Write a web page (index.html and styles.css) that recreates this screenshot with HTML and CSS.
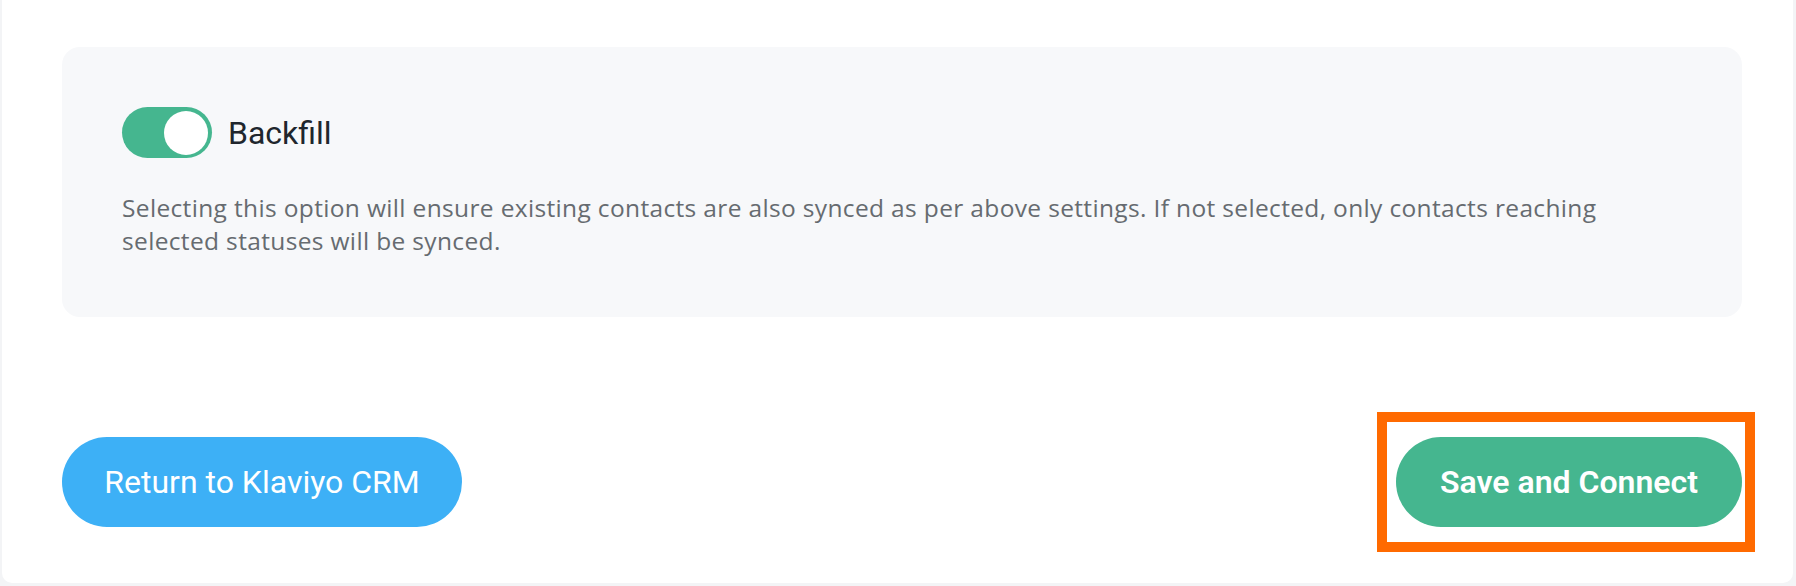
FILE: index.html
```html
<!DOCTYPE html>
<html lang="en">
<head>
    <meta charset="UTF-8">
    <meta name="viewport" content="width=device-width, initial-scale=1.0">
    <title>Klaviyo CRM settings</title>
    <link rel="stylesheet" href="styles.css">
</head>
<body>
    <div class="panel">
        <div class="option-card">
            <label class="switch-row">
                <span class="switch"><span class="knob"></span></span>
                <span class="switch-label">Backfill</span>
            </label>
            <p class="option-help">Selecting this option will ensure existing contacts are also synced as per above settings. If not selected, only contacts reaching selected statuses will be synced.</p>
        </div>

        <div class="actions">
            <button class="btn btn-return">Return to Klaviyo CRM</button>
            <span class="highlight">
                <button class="btn btn-save">Save and Connect</button>
            </span>
        </div>
    </div>
</body>
</html>
```

FILE: styles.css
```css
body {
    margin: 0;
    background: #f3f4f6;
    font-family: Roboto, "Noto Sans", Arial, sans-serif;
}
.panel {
    margin: 0 3px 2px 2px;
    padding: 47px 51px 56px 60px;
    background: white;
    border-radius: 0 0 10px 10px;
}
.option-card {
    padding: 60px 60px 60px 60px;
    background: #f7f8fa;
    border-radius: 18px;
}
.switch-row {
    display: flex;
    align-items: center;
    gap: 16px;
}
.switch {
    display: flex;
    align-items: center;
    justify-content: flex-end;
    width: 90px;
    height: 51px;
    padding: 0 4px;
    box-sizing: border-box;
    background: #45b68f;
    border-radius: 26px;
}
.knob {
    width: 44px;
    height: 44px;
    background: white;
    border-radius: 50%;
}
.switch-label {
    font-size: 32px;
    color: #20262d;
}
.option-help {
    margin: 33px 0 0 0;
    font-family: "Open Sans", Roboto, sans-serif;
    font-size: 24.5px;
    letter-spacing: 0.35px;
    line-height: 33px;
    color: #666b70;
}
.actions {
    display: flex;
    justify-content: space-between;
    align-items: center;
    margin-top: 120px;
}
.btn {
    height: 90px;
    padding: 0 40px;
    border: none;
    border-radius: 45px;
    color: white;
    font-family: inherit;
    font-size: 32px;
    cursor: pointer;
}
.btn-return {
    width: 400px;
    background: #3db0f6;
}
.btn-save {
    width: 346px;
    background: #45b68f;
    font-weight: 600;
}
.highlight {
    position: relative;
    display: flex;
}
.highlight::after {
    content: "";
    position: absolute;
    top: -25px;
    bottom: -25px;
    left: -19px;
    right: -13px;
    border: 10px solid #ff6a00;
}
```
